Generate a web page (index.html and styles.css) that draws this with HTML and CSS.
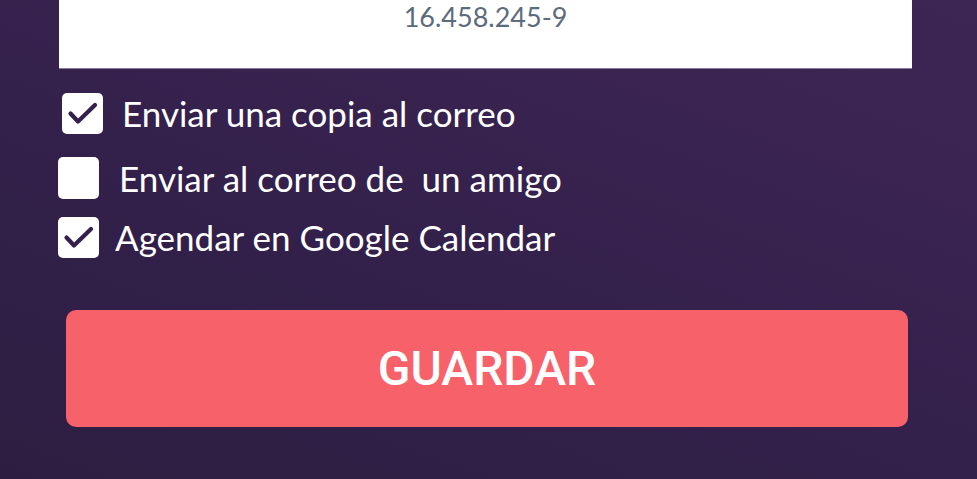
FILE: index.html
```html
<!DOCTYPE html>
<html lang="es">
<head>
<meta charset="utf-8">
<link rel="stylesheet" href="styles.css">
</head>
<body>
<div class="page">
  <div class="field"><span class="field-value">16.458.245-9</span></div>
  <div class="options">
    <label class="option opt-1">
      <span class="box checked"><svg viewBox="0 0 41 41" width="41" height="41"><path d="M8.5 20.5 L16 28.5 L33 12" fill="none" stroke="#35204b" stroke-width="4.2" stroke-linecap="round" stroke-linejoin="round"/></svg></span>
      <span class="label">Enviar una copia al correo</span>
    </label>
    <label class="option opt-2">
      <span class="box"></span>
      <span class="label">Enviar al correo de &nbsp;un amigo</span>
    </label>
    <label class="option opt-3">
      <span class="box checked"><svg viewBox="0 0 41 41" width="41" height="41"><path d="M8.5 20.5 L16 28.5 L33 12" fill="none" stroke="#35204b" stroke-width="4.2" stroke-linecap="round" stroke-linejoin="round"/></svg></span>
      <span class="label">Agendar en Google Calendar</span>
    </label>
  </div>
  <button class="save">GUARDAR</button>
</div>
</body>
</html>
```
FILE: styles.css
```css
html, body {
  margin: 0;
  padding: 0;
  height: 100%;
}
body {
  background: linear-gradient(200deg, #3d2653 0%, #392350 30%, #32204a 60%, #2d1e41 100%);
  font-family: Lato, "Open Sans", sans-serif;
  overflow: hidden;
}
.page {
  width: 977px;
  height: 479px;
  display: flex;
  flex-direction: column;
}
.field {
  margin-left: 59px;
  width: 853px;
  height: 68px;
  background: #ffffff;
  border-bottom: 1px solid #8a7aa0;
  display: flex;
  justify-content: center;
  align-items: flex-start;
}
.field-value {
  margin-top: 1px;
  font-size: 27px;
  line-height: 32px;
  color: #5c6c7c;
}
.options {
  display: flex;
  flex-direction: column;
  margin-top: 24px;
}
.option {
  display: flex;
  align-items: center;
  height: 41px;
}
.box {
  width: 41px;
  height: 41px;
  background: #ffffff;
  border-radius: 5px;
  display: flex;
  align-items: center;
  justify-content: center;
  flex: none;
}
.label {
  color: #ffffff;
  font-size: 35px;
  line-height: 41px;
  white-space: nowrap;
}
.opt-1 { padding-left: 62px; }
.opt-1 .label { margin-left: 19px; }
.opt-2 { padding-left: 58px; margin-top: 23px; height: 42px; }
.opt-2 .box { height: 42px; }
.opt-2 .label { margin-left: 20px; }
.opt-3 { padding-left: 58px; margin-top: 18px; }
.opt-3 .label { margin-left: 16px; }
.save {
  margin-top: 52px;
  margin-left: 66px;
  width: 842px;
  height: 117px;
  border: none;
  border-radius: 10px;
  background: #f76169;
  color: #ffffff;
  font-family: Roboto, "Liberation Sans", sans-serif;
  font-weight: 500;
  font-size: 48px;
  padding: 0;
}
```
